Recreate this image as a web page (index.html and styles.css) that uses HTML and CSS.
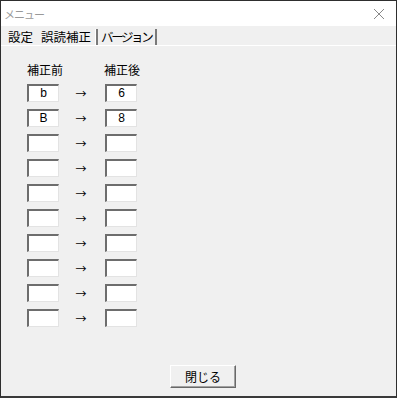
FILE: index.html
```html
<!DOCTYPE html>
<html lang="ja">
<head>
  <meta charset="UTF-8">
  <title>メニュー</title>
  <link rel="stylesheet" href="styles.css">
</head>
<body>
  <div class="window">
    <div class="titlebar">
      <span class="title">メニュー</span>
      <svg class="close" width="12" height="12" viewBox="0 0 12 12">
        <line x1="1" y1="1" x2="11" y2="11" stroke="#888" stroke-width="1"/>
        <line x1="11" y1="1" x2="1" y2="11" stroke="#888" stroke-width="1"/>
      </svg>
    </div>

    <div class="tabs">
      <span class="tab">設定</span>
      <span class="tab active">誤読補正</span>
      <span class="tab narrow">バージョン</span>
    </div>

    <div class="panel">
      <div class="pairs">
        <span class="label">補正前</span>
        <span></span>
        <span class="label">補正後</span>

        <div class="box">b</div><span class="arrow">→</span><div class="box">6</div>
        <div class="box">B</div><span class="arrow">→</span><div class="box">8</div>
        <div class="box"></div><span class="arrow">→</span><div class="box"></div>
        <div class="box"></div><span class="arrow">→</span><div class="box"></div>
        <div class="box"></div><span class="arrow">→</span><div class="box"></div>
        <div class="box"></div><span class="arrow">→</span><div class="box"></div>
        <div class="box"></div><span class="arrow">→</span><div class="box"></div>
        <div class="box"></div><span class="arrow">→</span><div class="box"></div>
        <div class="box"></div><span class="arrow">→</span><div class="box"></div>
        <div class="box"></div><span class="arrow">→</span><div class="box"></div>
      </div>

      <div class="footer">
        <button class="btn">閉じる</button>
      </div>
    </div>
  </div>
</body>
</html>
```

FILE: styles.css
```css
body {
  margin: 0;
  font-family: "Noto Sans CJK JP", "Liberation Sans", sans-serif;
  font-size: 12px;
  color: #000;
}
.window {
  width: 397px;
  height: 398px;
  box-sizing: border-box;
  border: 1px solid #2e2e2e;
  border-bottom: 2px solid #3a3a3a;
  background-color: #f0f0f0;
  display: flex;
  flex-direction: column;
}
.titlebar {
  height: 25px;
  background-color: #fff;
  display: flex;
  align-items: center;
  justify-content: space-between;
  padding: 0 11px 0 3px;
}
.title {
  color: #999;
  font-size: 11px;
  letter-spacing: -1px;
}
.tabs {
  height: 19px;
  display: flex;
  align-items: flex-end;
  padding-left: 7px;
  border-bottom: 1px solid #fff;
  line-height: 16px;
}
.tab {
  font-size: 12.5px;
  padding-right: 8px;
}
.tab.active {
  border-right: 2px solid #7a7a7a;
  box-shadow: inset -1px 0 0 #fff;
  padding-right: 5px;
  margin-right: 3px;
}
.tab.narrow {
  letter-spacing: -2.4px;
  border-right: 2px solid #7a7a7a;
  padding-right: 4px;
}
.panel {
  flex: 1;
  display: flex;
  flex-direction: column;
  padding: 17px 0 0 26px;
}
.pairs {
  display: grid;
  grid-template-columns: 32px 46px 32px;
  grid-template-rows: 14px;
  grid-auto-rows: 18px;
  row-gap: 7px;
}
.label {
  white-space: nowrap;
  line-height: 14px;
}
.label + span + .label {
  margin-left: -1px;
}
.box {
  box-sizing: border-box;
  background-color: #fff;
  border-top: 2px solid #6d6d6d;
  border-left: 2px solid #6d6d6d;
  border-right: 1px solid #e3e3e3;
  border-bottom: 1px solid #e3e3e3;
  text-align: center;
  font-family: "Liberation Sans", sans-serif;
  font-size: 12px;
  line-height: 15px;
}
.arrow {
  text-align: center;
  line-height: 18px;
  margin-left: -2px;
  font-size: 11px;
}
.footer {
  margin-top: auto;
  padding: 0 0 8px 143px;
}
.btn {
  width: 66px;
  height: 23px;
  background-color: #f0f0f0;
  border: 1px solid;
  border-color: #fff #696969 #696969 #fff;
  box-shadow: inset -1px -1px 0 #a0a0a0;
  font-family: inherit;
  font-size: 12px;
  padding: 0;
}
```
